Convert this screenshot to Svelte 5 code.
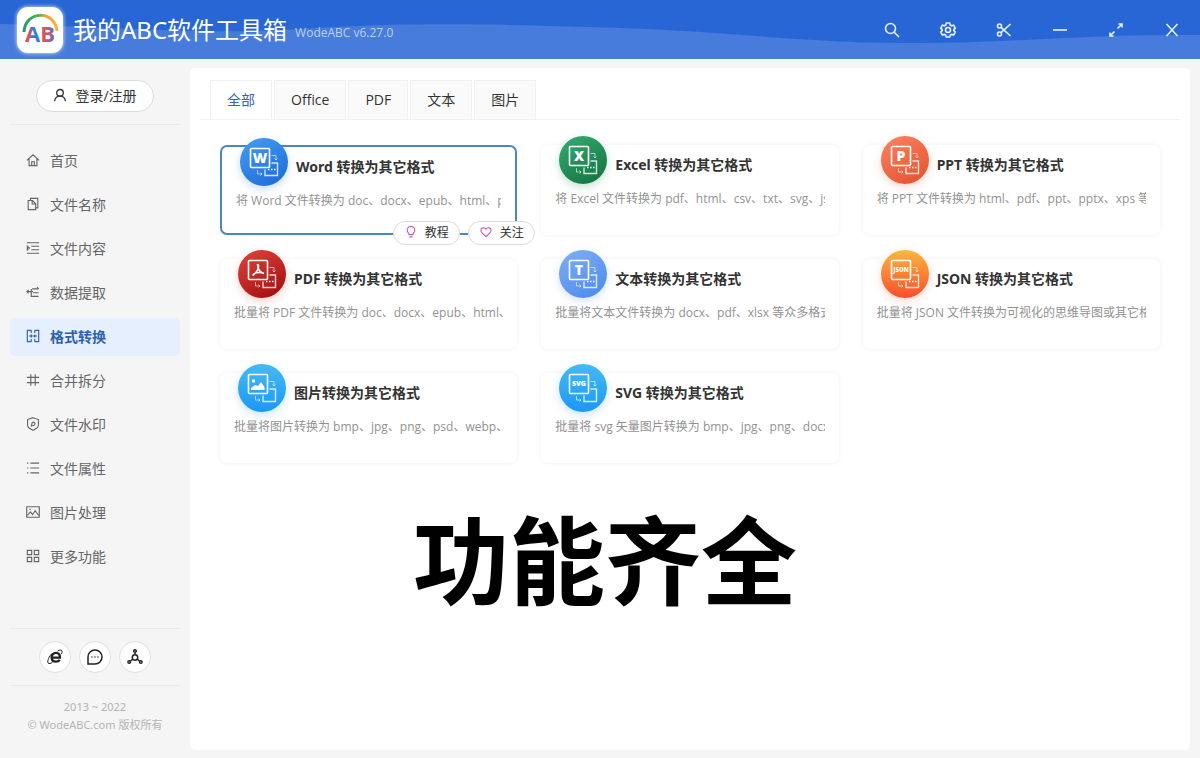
<script>
  let activeMenu = "格式转换";
  let activeTab = "全部";
  let selected = "word";

  const tabs = ["全部", "Office", "PDF", "文本", "图片"];

  const menu = [
    { name: "首页", d: "M1 8.500 8 2l7 6.500M3.500 6.500v8h9v-8M6.500 14v-4h3v4" },
    { name: "文件名称", d: "M5 4V1.500h8.500v11H11M2.500 4h5L11 7.500v7H2.500zM7 4.500v3.500h3.500" },
    { name: "文件内容", d: "M1 2h14M6 6h9M6 10h9M1 14h14M1.500 5.800l2.500 2.200-2.500 2.200z" },
    { name: "数据提取", d: "M7 4.500h7.500M12.500 2.500l2 2M1 7.500h7M3 5.500l-2 2 2 2M6 4.500v8.500h8.500M8 8.800h6.500" },
    { name: "格式转换", d: "M6 1.500H1.500v13H6M10 1.500h4.500v13H10M6 1.500v3M6 11.500v3M10 1.500v3M10 11.500v3M3.500 8H7M9 8h3.500M5.500 6.500 7 8l-1.500 1.500M10.500 6.500 9 8l1.500 1.500" },
    { name: "合并拆分", d: "M5.500 1.500v13M10.500 1.500v13M1 5h14M1 11h14" },
    { name: "文件水印", d: "M8 .800l6.200 2.100v6.600c0 2.500-3.400 4.500-6.200 5.700-2.800-1.200-6.200-3.200-6.200-5.700V2.900zM6 11l1-4.500c2-1.500 4 0 3 2s-2.500 1.500-3.500 1" },
    { name: "文件属性", d: "M5 2.500h10M5 8h10M5 13.500h10M1.200 2.500h1.500M1.200 8h1.500M1.200 13.500h1.500" },
    { name: "图片处理", d: "M.800 2h14.400v12H.800zM1.500 12l3.500-4 2.500 3 3-4.500 4 5.500M4 5h1.500" },
    { name: "更多功能", d: "M1.500 1.500h5v5h-5zM9.500 1.500h5v5h-5zM1.500 9.500h5v5h-5zM9.500 9.500h5v5h-5z" },
  ];

  const cards = [
    { id: "word", mark: "W", title: "Word 转换为其它格式", desc: "将 Word 文件转换为 doc、docx、epub、html、pdf" },
    { id: "excel", mark: "X", title: "Excel 转换为其它格式", desc: "将 Excel 文件转换为 pdf、html、csv、txt、svg、json" },
    { id: "ppt", mark: "P", title: "PPT 转换为其它格式", desc: "将 PPT 文件转换为 html、pdf、ppt、pptx、xps 等众多格式" },
    { id: "pdf", mark: "", title: "PDF 转换为其它格式", desc: "批量将 PDF 文件转换为 doc、docx、epub、html、" },
    { id: "text", mark: "T", title: "文本转换为其它格式", desc: "批量将文本文件转换为 docx、pdf、xlsx 等众多格式" },
    { id: "json", mark: "JSON", title: "JSON 转换为其它格式", desc: "批量将 JSON 文件转换为可视化的思维导图或其它格式" },
    { id: "image", mark: "", title: "图片转换为其它格式", desc: "批量将图片转换为 bmp、jpg、png、psd、webp、" },
    { id: "svg", mark: "SVG", title: "SVG 转换为其它格式", desc: "批量将 svg 矢量图片转换为 bmp、jpg、png、docx" },
  ];
</script>

<div class="app">
  <header class="topbar">
    <svg class="wave" viewBox="0 0 1200 59" preserveAspectRatio="none" aria-hidden="true">
      <path d="M0 24C90 25 190 36 300 29S500 24 620 28S800 43 910 43S1080 34 1200 35V59H0z" />
    </svg>
    <div class="brand">
      <svg class="logo" viewBox="0 0 46 46" aria-hidden="true">
        <defs>
          <linearGradient id="arc">
            <stop offset="0" stop-color="#1f9e6d" />
            <stop offset="0.5" stop-color="#58b947" />
            <stop offset="0.6" stop-color="#f39a3a" />
            <stop offset="1" stop-color="#f7b733" />
          </linearGradient>
          <linearGradient id="letters">
            <stop offset="0" stop-color="#e8504c" />
            <stop offset="0.15" stop-color="#d0506c" />
            <stop offset="0.25" stop-color="#2f7fd2" />
            <stop offset="0.5" stop-color="#2f7fd2" />
            <stop offset="0.6" stop-color="#e2504f" />
            <stop offset="0.8" stop-color="#c2567c" />
            <stop offset="1" stop-color="#3d78cc" />
          </linearGradient>
        </defs>
        <path d="M7 25C8 3 38 3 40 24" fill="none" stroke="url(#arc)" stroke-width="3" />
        <text x="23" y="35" text-anchor="middle" fill="url(#letters)">AB</text>
      </svg>
      <h1>我的ABC软件工具箱</h1>
      <span class="version">WodeABC v6.27.0</span>
    </div>
    <div class="window-actions">
      <button aria-label="搜索">
        <svg viewBox="0 0 16 16"><circle cx="6.500" cy="6.500" r="5" /><path d="M10.200 10.200 15 15" /></svg>
      </button>
      <button aria-label="设置">
        <svg viewBox="0 0 16 16"><path d="M6.300 1h3.400l.5 2 1.400.8 2-.6 1.700 3-1.500 1.400v1l1.500 1.400-1.700 3-2-.6-1.400.8-.5 1.800H6.300l-.5-1.800-1.400-.8-2 .6-1.700-3 1.500-1.400v-1L.700 6.200l1.700-3 2 .6 1.400-.8z" /><circle cx="8" cy="8" r="2.500" /></svg>
      </button>
      <button aria-label="截图">
        <svg viewBox="0 0 16 16"><circle cx="3.500" cy="4" r="2" /><circle cx="3.500" cy="12" r="2" /><path d="M5 5.300 14.500 14M5 10.700 14.500 2" /></svg>
      </button>
      <button aria-label="最小化">
        <svg viewBox="0 0 16 16"><path d="M1 8h14" /></svg>
      </button>
      <button aria-label="最大化">
        <svg viewBox="0 0 16 16"><path d="M9.500 6.500 14 2M10.500 2H14v3.500M6.500 9.500 2 14M2 10.500V14h3.500" /></svg>
      </button>
      <button aria-label="关闭">
        <svg viewBox="0 0 16 16"><path d="M2.500 2 13.500 14M13.500 2 2.500 14" /></svg>
      </button>
    </div>
  </header>

  <div class="body">
    <aside class="sidebar">
      <button class="login">
        <svg viewBox="0 0 16 16"><circle cx="8" cy="5.500" r="3.800" /><path d="M1.800 15c.5-4 3-5.700 6.200-5.700s5.700 1.700 6.200 5.700" /></svg>
        登录/注册
      </button>

      <nav class="menu">
        {#each menu as item}
          <button
            class="menu-item"
            class:active={activeMenu === item.name}
            on:click={() => (activeMenu = item.name)}
          >
            <svg viewBox="0 0 16 16"><path d={item.d} /></svg>
            {item.name}
          </button>
        {/each}
      </nav>

      <div class="links">
        <button aria-label="浏览器">
          <svg viewBox="0 0 16 16">
            <path d="M4.500 8.600H13C13.200 5.500 11.500 3.800 9 3.800S4.600 5.700 4.600 8.300 6.400 12.700 9 12.700c1.700 0 3-.6 3.700-2" stroke-width="2.300" />
            <path d="M10.500 2.200c2-1.500 4-1.600 4.500-.2.300 1-.1 2-.6 3M5 4.500C2.300 7 .100 11.800 1 13.900c.8 1.300 3 .6 4.700-.8" stroke-width="1" />
          </svg>
        </button>
        <button aria-label="反馈">
          <svg viewBox="0 0 16 16"><path d="M1 15V8a7 7 0 1 1 7 7z" /><path d="M4.500 8h1M7.500 8h1M10.500 8h1" /></svg>
        </button>
        <button aria-label="分享">
          <svg viewBox="0 0 16 16"><circle cx="8" cy="8.500" r="2.700" /><circle cx="8" cy="2" r="1.300" /><circle cx="2.200" cy="13" r="1.300" /><circle cx="13.800" cy="13" r="1.300" /><path d="M8 3.500v2M5.800 10.200 3.500 12M10.200 10.200l2.300 1.800" /></svg>
        </button>
      </div>

      <footer>
        <p>2013 ~ 2022</p>
        <p>© WodeABC.com 版权所有</p>
      </footer>
    </aside>

    <main class="panel">
      <div class="tabs" role="tablist">
        {#each tabs as tab}
          <button
            role="tab"
            class="tab"
            class:active={activeTab === tab}
            aria-selected={activeTab === tab}
            on:click={() => (activeTab = tab)}
          >
            {tab}
          </button>
        {/each}
      </div>

      <div class="grid">
        {#each cards as card}
          <article class="card" class:selected={selected === card.id}>
            <div class="card-head">
              <div class="badge {card.id}">
                <svg viewBox="0 0 48 48" aria-hidden="true">
                  <rect x="10.500" y="10.500" width="19" height="19" rx="1" />
                  <path class="back" d="M31.500 25H37.500V37.500H25V31.500" />
                  <path class="thin" d="M31.500 17.500H36V22M34.500 20.500 36 22l1.500-1.500M17.500 32v4H22M20.500 34.500 22 36l-1.500 1.500" />
                  {#if card.id === "pdf"}
                    <path d="M20 14c2 4-2 9-5.500 11.500M19.500 14c0 5 2 8 6.500 9.500M15 24.500c3-2 7-2.500 11-1" />
                  {:else if card.id === "image"}
                    <path class="solid" d="M13 26v-2l4-3 3 1 3-4 3.500 5v3zM14 15.500h3v3h-3z" />
                  {:else}
                    <text x="20" y={card.mark.length > 1 ? 22 : 25} class:small={card.mark.length > 1} text-anchor="middle">{card.mark}</text>
                  {/if}
                  {#if card.id !== "image" && card.id !== "svg"}
                    <path d="M28 31.500h1.500M31 31.500h1.500M34 31.500h1.500" />
                  {/if}
                </svg>
              </div>
              <h2>{card.title}</h2>
            </div>
            <p>{card.desc}</p>
            {#if selected === card.id}
              <div class="card-actions">
                <button>
                  <svg viewBox="0 0 16 16"><path d="M5.500 11.500c0-2-2.500-3-2.500-6a5 5 0 0 1 10 0c0 3-2.500 4-2.500 6zM6 14.500h4" /></svg>
                  教程
                </button>
                <button>
                  <svg viewBox="0 0 16 16"><path d="M8 14C4 11 1.200 8.800 1.200 5.700 1.200 2 6 1.300 8 4.300c2-3 6.800-2.300 6.800 1.400C14.800 8.800 12 11 8 14z" /></svg>
                  关注
                </button>
              </div>
            {/if}
          </article>
        {/each}
      </div>

      <div class="slogan">功能齐全</div>
    </main>
  </div>
</div>

<style>
  :global(body) {
    margin: 0;
    background: #f5f5f5;
  }

  .app {
    min-height: 100vh;
    display: flex;
    flex-direction: column;
    font-family: "Open Sans", "Noto Sans CJK SC", sans-serif;
    color: #333;
  }

  button {
    font-family: inherit;
    margin: 0;
    padding: 0;
    border: none;
    background: none;
    cursor: pointer;
  }

  svg {
    flex: none;
    fill: none;
    stroke: currentColor;
  }

  h1,
  h2,
  p {
    margin: 0;
  }

  .topbar {
    position: relative;
    height: 59px;
    display: flex;
    justify-content: space-between;
    background: #2866d6;
    color: white;
  }

  .wave {
    position: absolute;
    inset: 0;
    width: 100%;
    height: 100%;
    fill: #477bdc;
    stroke: none;
  }

  .brand,
  .window-actions {
    position: relative;
    display: flex;
    align-items: center;
  }

  .brand {
    padding-left: 17px;
  }

  .logo {
    width: 46px;
    height: 46px;
    background: white;
    border-radius: 11px;
    box-shadow: 0 0 4px rgba(255, 255, 255, 0.9);
    stroke: none;
  }

  .logo text {
    font-weight: 700;
    font-size: 22px;
  }

  .brand h1 {
    margin-left: 10px;
    font-family: "Noto Sans", "Noto Sans CJK SC", sans-serif;
    font-size: 24px;
    font-weight: 400;
    line-height: 32px;
  }

  .version {
    margin-left: 8px;
    padding-top: 7px;
    font-size: 12px;
    line-height: 18px;
    color: #bdd1f5;
  }

  .window-actions button {
    width: 56px;
    height: 56px;
    display: flex;
    align-items: center;
    justify-content: center;
    color: #e6f0ff;
  }

  .window-actions svg {
    width: 16px;
    height: 16px;
    stroke-width: 1.6;
  }

  .body {
    flex: 1;
    display: flex;
    padding: 9px 10px 8px 0;
  }

  .sidebar {
    width: 190px;
    flex: none;
    box-sizing: border-box;
    padding: 0 10px;
    display: flex;
    flex-direction: column;
  }

  .login {
    width: 118px;
    height: 32px;
    margin: 12px auto;
    padding-bottom: 2px;
    display: flex;
    align-items: center;
    justify-content: center;
    gap: 8px;
    box-sizing: border-box;
    border: 1px solid #dcdcdc;
    border-radius: 16px;
    background: white;
    font-size: 14px;
    color: #333;
  }

  .login svg {
    width: 14px;
    height: 14px;
    stroke-width: 1.5;
  }

  .menu {
    flex: 1;
    display: flex;
    flex-direction: column;
    gap: 6px;
    padding-top: 17px;
    border-top: 1px solid #ebebeb;
  }

  .menu-item {
    height: 38px;
    padding: 0 0 2px 16px;
    display: flex;
    align-items: center;
    gap: 10px;
    box-sizing: border-box;
    border-radius: 5px;
    font-size: 14px;
    color: #666;
  }

  .menu-item svg {
    width: 14px;
    height: 14px;
    stroke-width: 1.3;
  }

  .menu-item.active {
    background: #e6effd;
    color: #2c61ae;
    font-weight: 700;
  }

  .links {
    display: flex;
    justify-content: center;
    gap: 8px;
    padding: 12px 0;
    border: 1px solid #ebebeb;
    border-width: 1px 0;
  }

  .links button {
    width: 32px;
    height: 32px;
    display: flex;
    align-items: center;
    justify-content: center;
    box-sizing: border-box;
    border: 1px solid #dfdfdf;
    border-radius: 50%;
    background: white;
    color: #222;
  }

  .links svg {
    width: 16px;
    height: 16px;
    stroke-width: 1.5;
  }

  footer {
    padding: 12px 0 16px;
    text-align: center;
    font-family: "Noto Sans", "Noto Sans CJK SC", sans-serif;
    font-size: 11px;
    line-height: 18px;
    color: #b4b4b4;
    white-space: nowrap;
  }

  .panel {
    flex: 1;
    min-width: 0;
    background: white;
    border-radius: 5px;
  }

  .tabs {
    display: flex;
    gap: 2px;
    margin: 12px 10px 0;
    padding-left: 10px;
    border-bottom: 1px solid #f2f2f2;
  }

  .tab {
    height: 39px;
    padding: 0 16px 2px;
    border: 1px solid #f0f0f0;
    border-bottom: none;
    background: #fafafa;
    font-size: 14px;
    color: #333;
  }

  .tab.active {
    background: white;
    color: #2f66b8;
  }

  .grid {
    display: grid;
    grid-template-columns: repeat(3, minmax(0, 1fr));
    gap: 24px;
    padding: 25px 30px 0;
  }

  .card {
    position: relative;
    height: 90px;
    box-sizing: border-box;
    padding: 0 14px;
    border-radius: 7px;
    background: white;
    box-shadow: 0 0 5px rgba(0, 0, 0, 0.06);
  }

  .card.selected {
    border: 2px solid #4a86c0;
    box-shadow: none;
  }

  .card-head {
    display: flex;
    align-items: center;
    gap: 8px;
    margin-top: -9px;
    padding-left: 4px;
  }

  .card h2 {
    padding-top: 9px;
    font-family: "Noto Sans", "Noto Sans CJK SC", sans-serif;
    font-size: 14px;
    line-height: 20px;
    font-weight: 700;
    white-space: nowrap;
  }

  .card p {
    margin-top: 6px;
    overflow: hidden;
    white-space: nowrap;
    font-size: 12px;
    line-height: 18px;
    color: #929292;
  }

  .badge {
    width: 48px;
    height: 48px;
    flex: none;
    border-radius: 50%;
    color: white;
  }

  .badge svg {
    display: block;
    stroke-width: 1.6;
  }

  .badge .back {
    stroke-width: 1.4;
    opacity: 0.8;
  }

  .badge .thin {
    stroke-width: 1;
    opacity: 0.6;
  }

  .badge .solid,
  .badge text {
    fill: white;
    stroke: none;
  }

  .badge text {
    font-size: 14px;
    font-weight: 800;
  }

  .badge text.small {
    font-size: 7px;
  }

  .badge.json text {
    font-size: 6px;
  }

  .word {
    background: linear-gradient(150deg, #459df2, #1b68d8);
    box-shadow: 0 3px 8px rgba(40, 120, 230, 0.25);
  }

  .excel {
    background: linear-gradient(150deg, #35ad74, #12703c);
    box-shadow: 0 3px 8px rgba(20, 130, 80, 0.25);
  }

  .ppt {
    background: linear-gradient(150deg, #fb8262, #e3512d);
    box-shadow: 0 3px 8px rgba(240, 100, 60, 0.25);
  }

  .pdf {
    background: linear-gradient(150deg, #df453d, #9f0b0b);
    box-shadow: 0 3px 8px rgba(220, 60, 50, 0.25);
  }

  .text {
    background: linear-gradient(150deg, #7fb0f5, #4b88ec);
    box-shadow: 0 3px 8px rgba(80, 140, 240, 0.25);
  }

  .json {
    background: linear-gradient(180deg, #f9b83e, #fa4c2c);
    box-shadow: 0 3px 8px rgba(250, 90, 40, 0.25);
  }

  .image,
  .svg {
    background: linear-gradient(180deg, #45baf0, #1b98f8);
    box-shadow: 0 3px 8px rgba(40, 150, 240, 0.25);
  }

  .card-actions {
    position: absolute;
    right: -20px;
    bottom: -12px;
    z-index: 1;
    display: flex;
    gap: 8px;
  }

  .card-actions button {
    width: 67px;
    height: 24px;
    padding-bottom: 2px;
    display: flex;
    align-items: center;
    justify-content: center;
    gap: 8px;
    box-sizing: border-box;
    border: 1px solid #dcdcdc;
    border-radius: 12px;
    background: white;
    font-size: 12px;
    color: #333;
  }

  .card-actions svg {
    width: 12px;
    height: 12px;
    stroke-width: 1.4;
    color: #c850b4;
  }

  .slogan {
    padding: 23px 170px 0 0;
    text-align: center;
    font-family: "Noto Sans CJK SC", sans-serif;
    font-size: 96px;
    line-height: 140px;
    font-weight: 700;
    color: black;
  }
</style>
